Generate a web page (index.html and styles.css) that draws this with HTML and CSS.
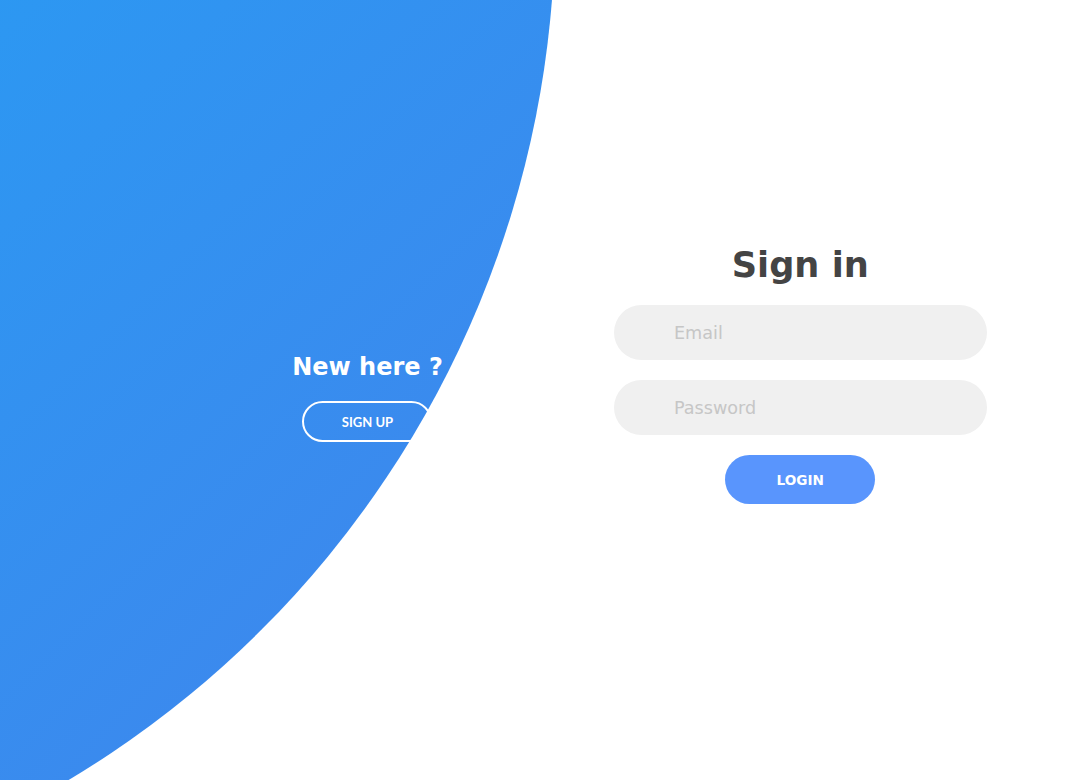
FILE: index.html
```html
<!DOCTYPE html>
<html lang="en">
<head>
<meta charset="utf-8">
<title>Sign in</title>
<link rel="stylesheet" href="styles.css">
</head>
<body>
<div class="container">
  <div class="panel left-panel">
    <div class="content">
      <h3 class="panel-title">New here ?</h3>
      <button class="btn transparent" type="button">Sign up</button>
    </div>
  </div>
  <div class="forms">
    <form class="sign-in-form">
      <h2 class="title">Sign in</h2>
      <div class="input-field">
        <i class="icon"></i>
        <input type="text" placeholder="Email">
      </div>
      <div class="input-field">
        <i class="icon"></i>
        <input type="password" placeholder="Password">
      </div>
      <button class="btn solid" type="button">Login</button>
    </form>
  </div>
</div>
</body>
</html>
```

FILE: styles.css
```css
* {
  box-sizing: border-box;
}

html, body {
  margin: 0;
  padding: 0;
}

body {
  font-family: "DejaVu Sans", sans-serif;
  background: #fff;
}

.container {
  position: relative;
  width: 100%;
  height: 100vh;
  min-height: 780px;
  overflow: hidden;
  display: grid;
  grid-template-columns: 1fr 1fr;
  background: #fff;
}

.container::before {
  content: "";
  position: absolute;
  width: 2000px;
  height: 2000px;
  top: -10%;
  right: 48%;
  transform: translateY(-50%);
  border-radius: 50%;
  background-image: linear-gradient(-45deg, #4481eb 0%, #04befe 100%);
  z-index: 0;
}

.panel {
  position: relative;
  z-index: 1;
  display: flex;
  flex-direction: column;
  align-items: flex-end;
  justify-content: center;
  padding: 17px 17% 0 12%;
  text-align: center;
}

.content {
  display: flex;
  flex-direction: column;
  align-items: center;
  color: #fff;
}

.panel-title {
  margin: 0;
  font-family: "DejaVu Sans", sans-serif;
  font-weight: 700;
  font-size: 24px;
  line-height: 1;
  color: #fff;
}

.btn {
  width: 150px;
  height: 49px;
  border: none;
  outline: none;
  border-radius: 49px;
  background-color: #5995fd;
  color: #fff;
  text-transform: uppercase;
  font-family: "DejaVu Sans", sans-serif;
  font-weight: 700;
  font-size: 13.6px;
  margin: 10px 0;
  padding: 1px 0 0;
  cursor: pointer;
}

.btn.transparent {
  margin: 22.4px 0 0;
  padding: 0;
  background: none;
  border: 2px solid #fff;
  width: 130px;
  height: 41px;
  font-family: Lato, sans-serif;
  font-weight: 700;
  font-size: 13px;
}

.forms {
  position: relative;
  z-index: 1;
  display: flex;
  align-items: center;
  justify-content: center;
}

.sign-in-form {
  width: 100%;
  display: flex;
  flex-direction: column;
  align-items: center;
  justify-content: center;
  padding: 0 80px 22px;
  margin: 0;
}

.title {
  margin: 0 0 10px;
  font-family: "DejaVu Sans", sans-serif;
  font-weight: 700;
  font-size: 35.2px;
  line-height: normal;
  color: #444;
}

.input-field {
  width: 100%;
  max-width: 380px;
  height: 55px;
  margin: 10px 0;
  padding: 0 6.4px;
  border-radius: 55px;
  background-color: #f0f0f0;
  display: grid;
  grid-template-columns: 15% 85%;
}

.icon {
  display: block;
}

.input-field input {
  width: 100%;
  min-width: 0;
  padding: 0;
  background: none;
  border: none;
  outline: none;
  line-height: 1;
  font-family: "DejaVu Sans", sans-serif;
  font-weight: 600;
  font-size: 17.6px;
  color: #333;
}

.input-field input::placeholder {
  color: #c6c6c6;
  font-weight: 500;
}
```
